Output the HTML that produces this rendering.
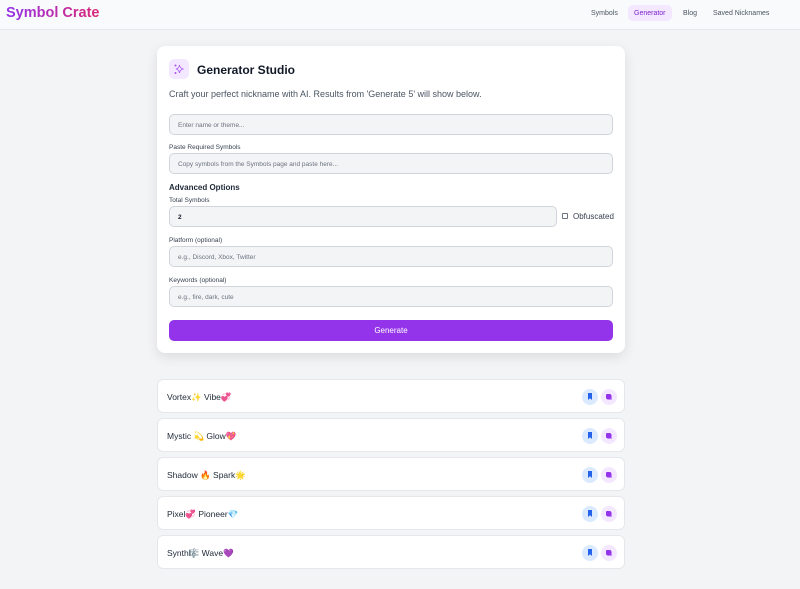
<!DOCTYPE html><html><head><style>
*{margin:0;padding:0;box-sizing:border-box}
body{width:800px;height:589px;background:#f3f4f6;font-family:"Liberation Sans",sans-serif;position:relative;overflow:hidden;color:#111827}
.a{position:absolute}
.nav{left:0;top:0;width:800px;height:30px;background:#f9fafb;border-bottom:1px solid #e5e7eb}
.logo{left:6px;top:5px;font-size:14.5px;font-weight:bold;background:linear-gradient(90deg,#9333ea,#db2777);-webkit-background-clip:text;color:transparent}
.nl{top:10px;font-size:7px;color:#4b5563}
.card{left:157px;top:46px;width:468px;height:307px;background:#fff;border-radius:8px;box-shadow:0 4px 12px rgba(0,0,0,.1)}
.inp{left:169px;width:444px;height:21px;background:#f3f4f6;border:1px solid #d1d5db;border-radius:5px;font-size:6.5px;color:#6b7280;padding:7px 0 0 8px}
.lb{left:169px;font-size:6.5px;color:#374151}
.res{left:157px;width:468px;height:34px;background:#fff;border:1px solid #e5e7eb;border-radius:6px}
.res span{position:absolute;left:9px;top:12px;font-size:8.5px;color:#1f2937}
.b1,.b2{position:absolute;top:9px;width:16px;height:16px;border-radius:50%}
.b1{left:424px;background:#dbeafe}.b2{left:443px;background:#f3e8ff}
.b1:after{content:"";position:absolute;left:6px;top:4px;width:4px;height:7px;background:#2563eb;clip-path:polygon(0 0,100% 0,100% 100%,50% 75%,0 100%)}
.b2:after{content:"";position:absolute;left:5px;top:5px;width:5px;height:5px;background:#9333ea;border-radius:1px;box-shadow:1px 1px 0 #c084fc}
</style></head><body>
<div class="a nav"></div>
<div class="a logo">Symbol Crate</div>
<div class="a nl" style="left:591px">Symbols</div>
<div class="a" style="left:628px;top:5px;width:44px;height:16px;background:#f3e8ff;border-radius:5px"></div>
<div class="a nl" style="left:634px;color:#7e22ce">Generator</div>
<div class="a nl" style="left:683px">Blog</div>
<div class="a nl" style="left:713px">Saved Nicknames</div>
<div class="a card"></div>
<div class="a" style="left:169px;top:59px;width:20px;height:20px;background:#f3e8ff;border-radius:5px"></div>
<svg class="a" style="left:173px;top:63px" width="12" height="12" viewBox="0 0 12 12" fill="none" stroke="#a855f7" stroke-width=".8"><path d="M6.5 2 Q7 5.5 10.5 6 Q7 6.5 6.5 10 Q6 6.5 3 6 Q6 5.5 6.5 2Z"/><circle cx="2.5" cy="2.5" r=".6" fill="#a855f7"/><circle cx="2.5" cy="10" r=".6" fill="#a855f7"/></svg>
<div class="a" style="left:197px;top:63px;font-size:12px;font-weight:bold">Generator Studio</div>
<div class="a" style="left:169px;top:89px;font-size:9px;color:#4b5563">Craft your perfect nickname with AI. Results from 'Generate 5' will show below.</div>
<div class="a inp" style="top:114px">Enter name or theme...</div>
<div class="a lb" style="top:144px">Paste Required Symbols</div>
<div class="a inp" style="top:153px">Copy symbols from the Symbols page and paste here...</div>
<div class="a" style="left:169px;top:183px;font-size:8px;font-weight:bold;color:#1f2937">Advanced Options</div>
<div class="a lb" style="top:197px">Total Symbols</div>
<div class="a inp" style="top:206px;width:388px;color:#111827;font-weight:bold">2</div>
<div class="a" style="left:562px;top:213px;width:6px;height:6px;border:1px solid #6b7280;border-radius:1px"></div>
<div class="a" style="left:573px;top:212px;font-size:8px;color:#374151">Obfuscated</div>
<div class="a lb" style="top:237px">Platform (optional)</div>
<div class="a inp" style="top:246px">e.g., Discord, Xbox, Twitter</div>
<div class="a lb" style="top:277px">Keywords (optional)</div>
<div class="a inp" style="top:286px">e.g., fire, dark, cute</div>
<div class="a" style="left:169px;top:320px;width:444px;height:21px;background:#9333ea;border-radius:5px;color:#fff;font-size:8px;text-align:center;line-height:21px">Generate</div>
<div class="a res" style="top:379px"><span>Vortex✨ Vibe💞</span><i class="b1"></i><i class="b2"></i></div>
<div class="a res" style="top:418px"><span>Mystic 💫 Glow💖</span><i class="b1"></i><i class="b2"></i></div>
<div class="a res" style="top:457px"><span>Shadow 🔥 Spark🌟</span><i class="b1"></i><i class="b2"></i></div>
<div class="a res" style="top:496px"><span>Pixel💞 Pioneer💎</span><i class="b1"></i><i class="b2"></i></div>
<div class="a res" style="top:535px"><span>Synth🎼 Wave💜</span><i class="b1"></i><i class="b2"></i></div>
</body></html>
